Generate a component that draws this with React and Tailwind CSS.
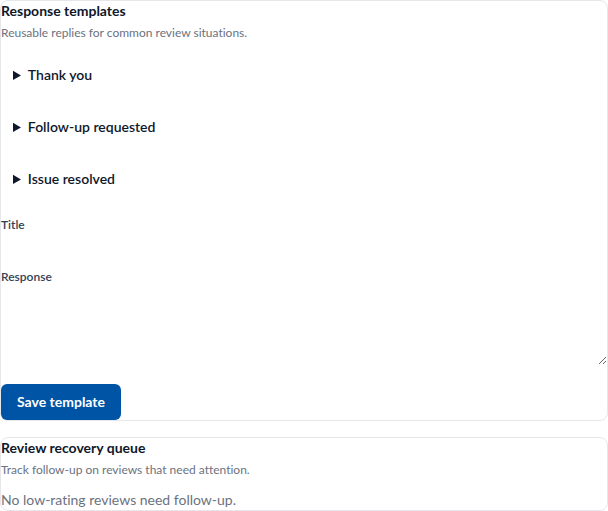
import { useState } from 'react';

const templates = [
    { title: 'Thank you', body: 'Thank you for your kind review.' },
    { title: 'Follow-up requested', body: 'Please contact us so we can follow up.' },
    { title: 'Issue resolved', body: 'We are glad the issue is resolved.' },
];

const SectionHeader = ({ title, description }) => (
    <header>
        <h2 className="text-sm leading-5 font-bold text-[#0f172a]">{title}</h2>
        <p className="mt-1 text-xs leading-4 text-[#6b7280]">{description}</p>
    </header>
);

const App = () => {
    const [items, setItems] = useState(templates);
    const [title, setTitle] = useState('');
    const [response, setResponse] = useState('');

    const handleSave = (e) => {
        e.preventDefault();
        if (!title || !response) return;
        setItems([...items, { title, body: response }]);
        setTitle('');
        setResponse('');
    };

    return (
        <div className="space-y-4 bg-white font-['Lato',sans-serif] [font-variant-ligatures:none]">
            <section className="rounded-lg border border-[#e5e7eb]">
                <SectionHeader
                    title="Response templates"
                    description="Reusable replies for common review situations."
                />

                <div className="mt-3 space-y-2">
                    {items.map((item) => (
                        <details key={item.title} className="p-3">
                            <summary className="text-sm leading-5 font-semibold text-[#0f172a]">{item.title}</summary>
                            <p className="mt-2 text-sm text-[#6b7280]">{item.body}</p>
                        </details>
                    ))}
                </div>

                <form onSubmit={handleSave} className="mt-4">
                    <label htmlFor="title" className="block text-xs leading-4 font-semibold text-[#334155]">Title</label>
                    <input
                        id="title"
                        value={title}
                        onChange={(e) => setTitle(e.target.value)}
                        className="mt-1 block h-5 w-full text-sm outline-none"
                    />
                    <label htmlFor="response" className="mt-3 block text-xs leading-4 font-semibold text-[#334155]">Response</label>
                    <textarea
                        id="response"
                        value={response}
                        onChange={(e) => setResponse(e.target.value)}
                        className="mt-1 block h-19 w-full resize-y text-sm outline-none"
                    />
                    <button type="submit" className="mt-[19px] block h-9 rounded-md bg-[#0054a6] px-4 text-sm font-bold text-white">
                        Save template
                    </button>
                </form>
            </section>

            <section className="rounded-lg border border-[#e5e7eb]">
                <SectionHeader
                    title="Review recovery queue"
                    description="Track follow-up on reviews that need attention."
                />
                <p className="mt-3 text-sm leading-5 text-[#6b7280]">No low-rating reviews need follow-up.</p>
            </section>
        </div>
    );
};

export default App;
